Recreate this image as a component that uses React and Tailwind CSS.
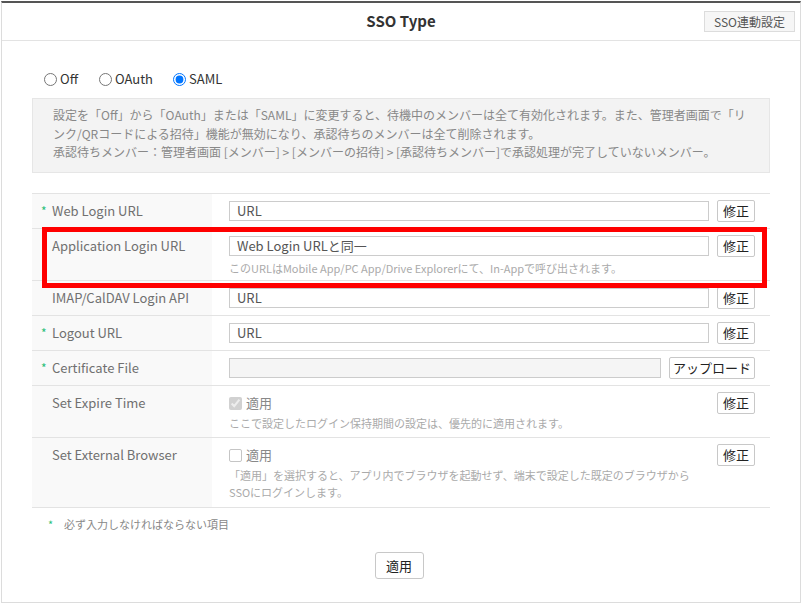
import React from "react";

const FONT = "font-['Noto_Sans_CJK_JP','Noto_Sans',sans-serif]";

function Star() {
  return <span className="inline-block w-[11px] text-[#2bbf7a] text-[12px] align-top">*</span>;
}

function Btn({ children, w = "w-[38px]" }) {
  return (
    <button className={`${w} h-[22px] shrink-0 border border-[#c8c8c8] rounded-[2px] bg-white text-[13px] text-[#222] leading-[20px] flex items-center justify-center`}>
      {children}
    </button>
  );
}

function Row({ h, label, required, children }) {
  return (
    <div className={`flex ${h} border-b border-[#e3e3e3]`}>
      <div className="w-[180px] shrink-0 bg-[#f9f9f9] pl-[9px] pt-[7px] text-[13px] leading-[20px] text-[#707070]">
        {required ? <Star /> : <span className="inline-block w-[11px]" />}
        {label}
      </div>
      <div className="flex-1 pl-[17px] pr-[15px] pt-[6px] flex items-start gap-[8px]">{children}</div>
    </div>
  );
}

function TextInput({ value, bg = "bg-white" }) {
  return (
    <div className={`h-[20px] border border-[#ccc] ${bg} px-[7px] text-[13px] leading-[18px] text-[#555] mt-[1px]`}>{value}</div>
  );
}

export default function App() {
  return (
    <div className={`relative w-[801px] h-[603px] bg-white ${FONT}`}>
      <div className="ml-[1px] mt-[1px] w-[800px] h-[602px] border border-[#dcdcdc] border-t-2 border-t-[#555] flex flex-col">
        {/* header */}
        <div className="relative h-[38px] shrink-0 border-b border-[#e3e3e3] flex items-center justify-center">
          <span className="text-[15px] font-bold text-[#333]">SSO Type</span>
          <button className="absolute right-[5px] top-[8px] w-[91px] h-[21px] border border-[#dcdcdc] bg-[#f6f6f6] text-[12px] text-[#555] leading-[19px]">
            SSO連動設定
          </button>
        </div>

        <div className="px-[30px]">
          {/* radios */}
          <div className="flex items-center h-[20px] mt-[28px] pl-[12px] text-[13px] text-[#333]">
            <label className="flex items-center gap-[3px]">
              <input type="radio" name="sso" className="m-0 w-[13px] h-[13px]" />
              <span>Off</span>
            </label>
            <label className="flex items-center gap-[3px] ml-[21px]">
              <input type="radio" name="sso" className="m-0 w-[13px] h-[13px]" />
              <span>OAuth</span>
            </label>
            <label className="flex items-center gap-[3px] ml-[20px]">
              <input type="radio" name="sso" defaultChecked className="m-0 w-[13px] h-[13px]" />
              <span>SAML</span>
            </label>
          </div>

          {/* info box */}
          <div className="mt-[9px] h-[75px] border border-[#e6e6e6] bg-[#f3f3f3] pl-[20px] pt-[7px] text-[12px] leading-[18.5px] text-[#888] whitespace-nowrap">
            <div>設定を「Off」から「OAuth」または「SAML」に変更すると、待機中のメンバーは全て有効化されます。また、管理者画面で「リ</div>
            <div>ンク/QRコードによる招待」機能が無効になり、承認待ちのメンバーは全て削除されます。</div>
            <div>承認待ちメンバー：管理者画面 [メンバー] &gt; [メンバーの招待] &gt; [承認待ちメンバー]で承認処理が完了していないメンバー。</div>
          </div>

          {/* table */}
          <div className="mt-[20px] border-t border-[#e3e3e3]">
            <Row h="h-[35px]" label="Web Login URL" required>
              <div className="flex-1"><TextInput value="URL" /></div>
              <Btn>修正</Btn>
            </Row>
            <Row h="h-[52px]" label="Application Login URL">
              <div className="flex-1">
                <TextInput value="Web Login URLと同一" />
                <div className="mt-[4px] text-[11px] leading-[17px] text-[#aaa] whitespace-nowrap">
                  このURLはMobile App/PC App/Drive Explorerにて、In-Appで呼び出されます。
                </div>
              </div>
              <Btn>修正</Btn>
            </Row>
            <Row h="h-[35px]" label="IMAP/CalDAV Login API">
              <div className="flex-1"><TextInput value="URL" /></div>
              <Btn>修正</Btn>
            </Row>
            <Row h="h-[35px]" label="Logout URL" required>
              <div className="flex-1"><TextInput value="URL" /></div>
              <Btn>修正</Btn>
            </Row>
            <Row h="h-[35px]" label="Certificate File" required>
              <div className="flex-1"><TextInput value="" bg="bg-[#f5f5f5]" /></div>
              <Btn w="w-[86px]">アップロード</Btn>
            </Row>
            <Row h="h-[52px]" label="Set Expire Time">
              <div className="flex-1">
                <label className="flex items-center h-[20px] gap-[4px] mt-[1px] text-[13px] text-[#888]">
                  <input type="checkbox" defaultChecked disabled className="m-0 w-[13px] h-[13px]" />
                  <span>適用</span>
                </label>
                <div className="mt-[2px] text-[11px] leading-[17px] text-[#aaa] whitespace-nowrap">
                  ここで設定したログイン保持期間の設定は、優先的に適用されます。
                </div>
              </div>
              <Btn>修正</Btn>
            </Row>
            <Row h="h-[70px]" label="Set External Browser">
              <div className="flex-1">
                <label className="flex items-center h-[20px] gap-[4px] mt-[1px] text-[13px] text-[#888]">
                  <input type="checkbox" className="appearance-none m-0 w-[13px] h-[13px] border border-[#c5c5c5] rounded-[2px] bg-white" />
                  <span>適用</span>
                </label>
                <div className="mt-[2px] text-[11px] leading-[17px] text-[#aaa] whitespace-nowrap">
                  「適用」を選択すると、アプリ内でブラウザを起動せず、端末で設定した既定のブラウザから
                  <br />
                  SSOにログインします。
                </div>
              </div>
              <Btn>修正</Btn>
            </Row>
          </div>

          {/* legend */}
          <div className="mt-[7px] pl-[16px] h-[18px] flex items-center text-[11px] text-[#888]">
            <span className="text-[#2bbf7a] w-[16px]">*</span>
            <span>必ず入力しなければならない項目</span>
          </div>

          <div className="mt-[19px] flex justify-center pr-[4px]">
            <button className="w-[49px] h-[27px] border border-[#c8c8c8] rounded-[3px] bg-white text-[13px] text-[#222]">
              適用
            </button>
          </div>
        </div>
      </div>

      {/* red highlight overlay */}
      <div className="absolute left-[42px] top-[226px] w-[725px] h-[61px] border-[5px] border-[#ff0000] pointer-events-none" />
    </div>
  );
}
